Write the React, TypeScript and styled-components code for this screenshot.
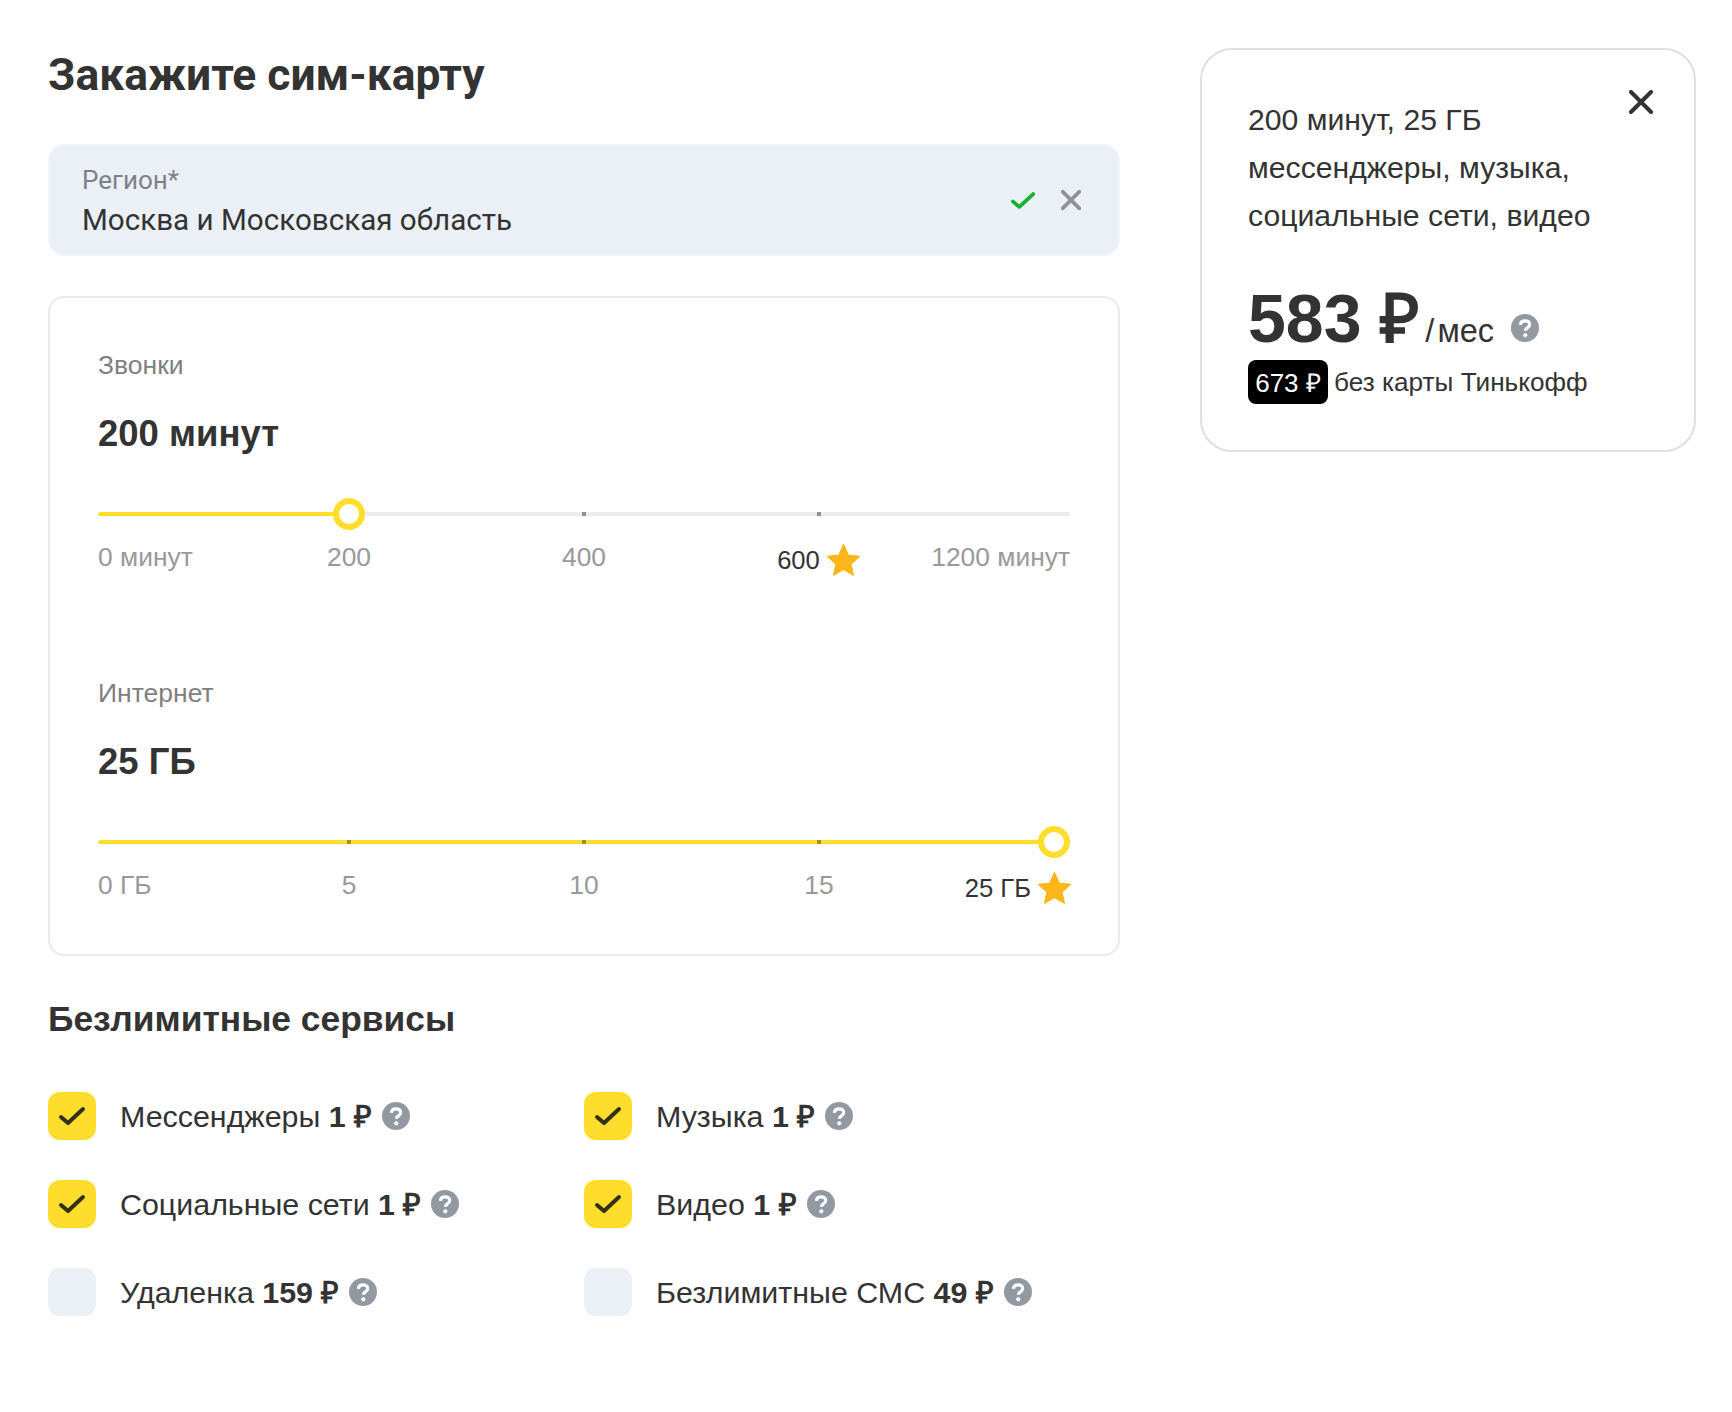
import React from "react";
import styled, { createGlobalStyle } from "styled-components";

const Global = createGlobalStyle`
  html, body { margin: 0; padding: 0; background: #fff; }
  body { font-family: "Liberation Sans", Arial, sans-serif; color: #333; }
  * { box-sizing: border-box; }
`;

const Page = styled.div`
  width: 1732px;
  height: 1412px;
  display: grid;
  grid-template-columns: 1072px 496px;
  column-gap: 80px;
  align-items: start;
  padding: 48px 0 0 48px;
`;
const Left = styled.div`
  display: flex;
  flex-direction: column;
`;
const Title = styled.h1`
  margin: 3px 0 45px;
  font: 700 44.4px/48px Roboto, sans-serif;
  color: #333;
`;
const Region = styled.div`
  height: 112px;
  border: 2px solid #f1f4f9;
  border-radius: 16px;
  background: #ebf0f6;
  display: flex;
  align-items: center;
  justify-content: space-between;
  padding: 0 37px 0 32px;
`;
const RegionText = styled.div`
  display: flex;
  flex-direction: column;
  padding-top: 4px;
`;
const RegionLabel = styled.span`
  font: 400 26px/36px Roboto, sans-serif;
  color: #7d8187;
`;
const RegionValue = styled.span`
  font: 400 29.6px/44px Roboto, sans-serif;
  color: #333;
`;
const RegionIcons = styled.div`
  display: flex;
  align-items: center;
  gap: 26px;
`;
const Card = styled.div`
  margin-top: 40px;
  height: 660px;
  border: 2px solid #ebebeb;
  border-radius: 16px;
  padding: 51px 48px 0;
  display: flex;
  flex-direction: column;
  gap: 98px;
`;
const Block = styled.div`
  display: flex;
  flex-direction: column;
`;
const BlockLabel = styled.div`
  font-size: 26.5px;
  line-height: 32px;
  color: #7f7f7f;
`;
const BlockValue = styled.div`
  margin-top: 29px;
  font-size: 36.5px;
  line-height: 48px;
  font-weight: 700;
  color: #333;
`;
const Track = styled.div`
  position: relative;
  margin-top: 54px;
  height: 4px;
  border-radius: 2px;
  background: #ebecee;
`;
const Fill = styled.div`
  position: absolute;
  left: 0;
  top: 0;
  height: 4px;
  border-radius: 2px;
  background: #ffdd2d;
`;
const Tick = styled.span<{ $on?: boolean }>`
  position: absolute;
  top: 0;
  width: 4px;
  height: 4px;
  margin-left: -2px;
  background: ${(p) => (p.$on ? "#a58f1f" : "#8f8f8f")};
`;
const Thumb = styled.span`
  position: absolute;
  top: -14px;
  width: 32px;
  height: 32px;
  margin-left: -16px;
  border-radius: 50%;
  border: 6px solid #ffdd2d;
  background: #fff;
`;
const Marks = styled.div`
  margin-top: 25px;
  display: grid;
  grid-template-columns: minmax(0, 1fr) 235px 235px 235px minmax(0, 1fr);
  align-items: start;
`;
const Mark = styled.div<{ $align: string }>`
  font-size: 26.4px;
  line-height: 32px;
  color: #999;
  justify-self: ${(p) => p.$align};
  white-space: nowrap;
`;
const BestMark = styled.div<{ $end?: boolean }>`
  display: flex;
  align-items: center;
  justify-self: ${(p) => (p.$end ? "end" : "center")};
  margin-right: ${(p) => (p.$end ? "-2px" : "0")};
  gap: 6px;
  font-size: 25.6px;
  line-height: 38px;
  color: #333;
  white-space: nowrap;
`;
const Heading = styled.h2`
  margin: 43px 0 0;
  font-size: 35.4px;
  line-height: 40px;
  font-weight: 700;
  color: #333;
`;
const Services = styled.div`
  margin-top: 53px;
  display: grid;
  grid-template-columns: 536px 1fr;
  row-gap: 40px;
`;
const Service = styled.div`
  display: flex;
  align-items: center;
  height: 48px;
`;
const Box = styled.span<{ $on: boolean }>`
  flex: none;
  width: 48px;
  height: 48px;
  border-radius: 12px;
  background: ${(p) => (p.$on ? "#ffdd2d" : "#ebf0f6")};
  display: flex;
  align-items: center;
  justify-content: center;
  margin-right: 24px;
`;
const ServiceText = styled.span`
  font-size: 30.4px;
  line-height: 40px;
  color: #333;
  white-space: nowrap;
`;
const Bold = styled.b`
  font-weight: 700;
`;
const HelpWrap = styled.span`
  display: inline-flex;
  margin-left: 10px;
`;
const Side = styled.aside`
  position: relative;
  height: 404px;
  border: 2px solid #e0e0e0;
  border-radius: 32px;
  padding: 46px 46px 0;
`;
const Close = styled.span`
  position: absolute;
  top: 40px;
  right: 41px;
  display: flex;
`;
const SideLines = styled.div`
  font-size: 30.2px;
  line-height: 48px;
  color: #333;
`;
const PriceRow = styled.div`
  margin-top: 40px;
  display: flex;
  align-items: baseline;
`;
const Price = styled.span`
  font-size: 68px;
  line-height: 76px;
  font-weight: 700;
  color: #333;
`;
const Per = styled.span`
  margin-left: 5px;
  font-size: 32.5px;
  color: #333;
`;
const Slash = styled.span`
  margin-right: 3px;
`;
const PriceHelp = styled.span`
  margin-left: 17px;
  display: inline-flex;
  align-self: center;
  margin-top: 19px;
`;
const NoCard = styled.div`
  margin-top: 4px;
  display: flex;
  align-items: center;
  gap: 6px;
  font-size: 26.2px;
  color: #333;
`;
const Badge = styled.span`
  width: 80px;
  height: 44px;
  border-radius: 8px;
  background: #000;
  color: #fff;
  font-size: 26px;
  display: flex;
  align-items: center;
  justify-content: center;
`;

const Help = ({ size = 28 }: { size?: number }) => (
  <svg width={size} height={size} viewBox="0 0 28 28">
    <circle cx="14" cy="14" r="14" fill="#9299a2" />
    <path d="M9.4 10.8c.2-2.6 2.1-4 4.7-4 2.7 0 4.6 1.5 4.6 3.8 0 1.7-1 2.6-2.3 3.4-1.4.8-2 1.3-2 2.8" fill="none" stroke="#fff" strokeWidth="3.2" />
    <circle cx="14.3" cy="21.3" r="2.1" fill="#fff" />
  </svg>
);
const Star = () => (
  <svg width="35" height="35" viewBox="0 0 34 34">
    <path d="M17 1.5l4.6 10.2 11 1.3-8.2 7.4 2.3 10.9-9.7-5.5-9.7 5.5 2.3-10.9L1.4 13l11-1.3z" fill="#fdb61a" stroke="#fdb61a" strokeLinejoin="round" />
  </svg>
);
const Check = () => (
  <svg width="28" height="22" viewBox="0 0 28 22">
    <path d="M3 12l7 6L25 4" fill="none" stroke="#333119" strokeWidth="4" strokeLinecap="round" strokeLinejoin="round" />
  </svg>
);
const GreenCheck = () => (
  <svg width="24" height="19" viewBox="0 0 26 20">
    <path d="M2 11l7 6L24 3" fill="none" stroke="#0cb52d" strokeWidth="4" strokeLinecap="round" strokeLinejoin="round" />
  </svg>
);
const Cross = ({ size, color, w }: { size: number; color: string; w: number }) => (
  <svg width={size} height={size} viewBox="0 0 24 24">
    <path d="M2 2l20 20M22 2L2 22" fill="none" stroke={color} strokeWidth={w} strokeLinecap="round" />
  </svg>
);

type M = { text: string; best?: boolean };
const Slider = ({ label, value, pos, marks }: { label: string; value: string; pos: number; marks: M[] }) => {
  const ticks = [251, 486, 721];
  return (
    <Block>
      <BlockLabel>{label}</BlockLabel>
      <BlockValue>{value}</BlockValue>
      <Track>
        <Fill style={{ width: pos }} />
        {ticks.map((t) => (
          <Tick key={t} $on={t < pos} style={{ left: t }} />
        ))}
        <Thumb style={{ left: pos }} />
      </Track>
      <Marks>
        {marks.map((m, i) =>
          m.best ? (
            <BestMark key={m.text} $end={i === 4}>
              {m.text}
              <Star />
            </BestMark>
          ) : (
            <Mark key={m.text} $align={i === 0 ? "start" : i === 4 ? "end" : "center"}>
              {m.text}
            </Mark>
          )
        )}
      </Marks>
    </Block>
  );
};

const services = [
  { name: "Мессенджеры", price: "1 ₽", on: true },
  { name: "Музыка", price: "1 ₽", on: true },
  { name: "Социальные сети", price: "1 ₽", on: true },
  { name: "Видео", price: "1 ₽", on: true },
  { name: "Удаленка", price: "159 ₽", on: false },
  { name: "Безлимитные СМС", price: "49 ₽", on: false },
];

export default function App() {
  return (
    <>
      <Global />
      <Page>
        <Left>
          <Title>Закажите сим-карту</Title>
          <Region>
            <RegionText>
              <RegionLabel>Регион*</RegionLabel>
              <RegionValue>Москва и Московская область</RegionValue>
            </RegionText>
            <RegionIcons>
              <GreenCheck />
              <Cross size={20} color="#8f9194" w={4.4} />
            </RegionIcons>
          </Region>
          <Card>
            <Slider
              label="Звонки"
              value="200 минут"
              pos={251}
              marks={[{ text: "0 минут" }, { text: "200" }, { text: "400" }, { text: "600", best: true }, { text: "1200 минут" }]}
            />
            <Slider
              label="Интернет"
              value="25 ГБ"
              pos={956}
              marks={[{ text: "0 ГБ" }, { text: "5" }, { text: "10" }, { text: "15" }, { text: "25 ГБ", best: true }]}
            />
          </Card>
          <Heading>Безлимитные сервисы</Heading>
          <Services>
            {services.map((s) => (
              <Service key={s.name}>
                <Box $on={s.on}>{s.on && <Check />}</Box>
                <ServiceText>
                  {s.name} <Bold>{s.price}</Bold>
                </ServiceText>
                <HelpWrap>
                  <Help />
                </HelpWrap>
              </Service>
            ))}
          </Services>
        </Left>
        <Side>
          <Close>
            <Cross size={24} color="#333" w={4} />
          </Close>
          <SideLines>
            200 минут, 25 ГБ
            <br />
            мессенджеры, музыка,
            <br />
            социальные сети, видео
          </SideLines>
          <PriceRow>
            <Price>583 ₽</Price>
            <Per>
              <Slash>/</Slash>мес
            </Per>
            <PriceHelp>
              <Help />
            </PriceHelp>
          </PriceRow>
          <NoCard>
            <Badge>673 ₽</Badge>
            без карты Тинькофф
          </NoCard>
        </Side>
      </Page>
    </>
  );
}
